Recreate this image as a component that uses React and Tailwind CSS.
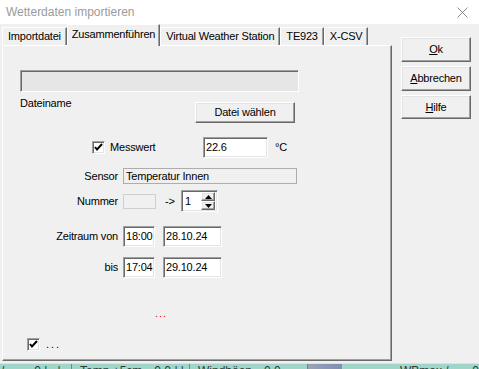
import React from 'react';

const raised =
  'border border-t-white border-l-white border-b-[#696969] border-r-[#696969] shadow-[inset_-1px_-1px_0_#a0a0a0,inset_1px_1px_0_#e3e3e3]';
const sunken =
  'border border-t-[#a0a0a0] border-l-[#a0a0a0] border-b-white border-r-white shadow-[inset_1px_1px_0_#696969,inset_-1px_-1px_0_#e3e3e3]';

function Check() {
  return (
    <div className={`w-[13px] h-[13px] bg-white ${sunken} flex items-center justify-center shrink-0`}>
      <svg width="9" height="9" viewBox="0 0 9 9">
        <path d="M1 4 L3 6.5 L8 1" stroke="#000" strokeWidth="2" fill="none" />
      </svg>
    </div>
  );
}

function Field({ w, h = 21, children, className = '' }) {
  return (
    <div
      style={{ width: w, height: h }}
      className={`bg-white ${sunken} flex items-center pl-[2px] shrink-0 ${className}`}
    >
      {children}
    </div>
  );
}

function Label({ children }) {
  return <div className="w-[115px] text-right shrink-0">{children}</div>;
}

function Btn({ children, className = '' }) {
  return (
    <div className={`bg-[#f0f0f0] ${raised} flex items-center justify-center ${className}`}>
      {children}
    </div>
  );
}

function Tab({ label, active }) {
  if (active) {
    return (
      <div className="h-[22px] px-[4px] flex items-start pt-[3px] border-t border-l border-t-white border-l-white border-r border-r-[#696969] shadow-[inset_-1px_0_0_#a0a0a0] bg-[#f0f0f0] -mb-px relative z-10">
        {label}
      </div>
    );
  }
  return (
    <div className="h-[18px] mt-[3px] px-[5px] flex items-center border-t border-l border-t-white border-l-white border-r border-r-[#696969] shadow-[inset_-1px_0_0_#a0a0a0] bg-[#f0f0f0]">
      {label}
    </div>
  );
}

export default function App() {
  return (
    <div
      className="w-[479px] h-[369px] bg-[#f0f0f0] overflow-hidden text-[11px] leading-[13px] tracking-[-0.2px] text-black flex flex-col"
      style={{ fontFamily: '"Liberation Sans", Arial, sans-serif' }}
    >
      {/* Title bar */}
      <div className="h-[24px] bg-white flex items-center justify-between pl-[6px] pr-[11px] shrink-0">
        <span className="text-[12px] tracking-normal text-[#9b9b9b]">Wetterdaten importieren</span>
        <svg width="11" height="11" viewBox="0 0 11 11">
          <path d="M0.5 0.5 L10.5 10.5 M10.5 0.5 L0.5 10.5" stroke="#8a8a8a" strokeWidth="1" />
        </svg>
      </div>

      <div className="flex flex-1">
        {/* Tabs + panel */}
        <div className="ml-[2px] w-[390px] flex flex-col">
          <div className="flex h-[21px] items-start">
            <Tab label="Importdatei" />
            <Tab label="Zusammenführen" active />
            <Tab label="Virtual Weather Station" />
            <Tab label="TE923" />
            <Tab label="X-CSV" />
          </div>
          <div className="h-[316px] border border-t-white border-l-white border-r-[#696969] border-b-[#696969] shadow-[inset_-1px_-1px_0_#a0a0a0] flex flex-col">
            {/* Dateiname field */}
            <div className="ml-[17px] mt-[24px] w-[279px] h-[22px] bg-[#e6e6e6] border border-t-[#a0a0a0] border-l-[#a0a0a0] border-b-white border-r-white shadow-[inset_1px_1px_0_#696969]" />
            <div className="flex ml-[17px] items-start">
              <div className="mt-[5px] w-[175px]">Dateiname</div>
              <Btn className="mt-[10px] w-[100px] h-[21px]">Datei wählen</Btn>
            </div>

            {/* Messwert */}
            <div className="flex items-center mt-[14px] h-[21px]">
              <div className="ml-[89px]">
                <Check />
              </div>
              <span className="ml-[5px] w-[93px]">Messwert</span>
              <Field w={65}>22.6</Field>
              <span className="ml-[7px]">°C</span>
            </div>

            {/* Sensor */}
            <div className="flex items-center mt-[10px]">
              <Label>Sensor</Label>
              <div className="ml-[5px] w-[174px] h-[16px] border border-[#adadad] flex items-center pl-[2px]">
                Temperatur Innen
              </div>
            </div>

            {/* Nummer */}
            <div className="flex items-center mt-[6px] h-[22px]">
              <Label>Nummer</Label>
              <div className="ml-[5px] w-[33px] h-[15px] border border-[#cfcfcf]" />
              <span className="ml-[9px] w-[16px]">-&gt;</span>
              <div className={`w-[37px] h-[22px] bg-white ${sunken} flex items-center pl-[3px] pr-[2px]`}>
                <span className="flex-1">1</span>
                <div className="flex flex-col w-[14px] h-[18px]">
                  <Btn className="flex-1">
                    <svg width="7" height="4" viewBox="0 0 7 4">
                      <path d="M0 4 L3.5 0 L7 4 Z" fill="#000" />
                    </svg>
                  </Btn>
                  <Btn className="flex-1">
                    <svg width="7" height="4" viewBox="0 0 7 4">
                      <path d="M0 0 L3.5 4 L7 0 Z" fill="#000" />
                    </svg>
                  </Btn>
                </div>
              </div>
            </div>

            {/* Zeitraum von */}
            <div className="flex items-center mt-[14px]">
              <Label>Zeitraum von</Label>
              <Field w={32} className="ml-[5px]">18:00</Field>
              <Field w={59} className="ml-[8px]">28.10.24</Field>
            </div>

            {/* bis */}
            <div className="flex items-center mt-[10px]">
              <Label>bis</Label>
              <Field w={32} className="ml-[5px]">17:04</Field>
              <Field w={59} className="ml-[8px]">29.10.24</Field>
            </div>

            <div className="ml-[152px] mt-[31px] text-[#e00000] tracking-[1px] leading-[8px]">...</div>

            <div className="flex items-center ml-[24px] mt-[21px]">
              <Check />
              <span className="ml-[6px] tracking-[2px]">...</span>
            </div>
          </div>
        </div>

        {/* Right-side buttons */}
        <div className="ml-[9px] mt-[13px] flex flex-col gap-[4px]">
          <Btn className="w-[70px] h-[25px]">
            <span><u>O</u>k</span>
          </Btn>
          <Btn className="w-[70px] h-[25px]">
            <span><u>A</u>bbrechen</span>
          </Btn>
          <Btn className="w-[70px] h-[24px]">
            <span><u>H</u>ilfe</span>
          </Btn>
        </div>
      </div>

      {/* Background application peeking below */}
      <div className="h-[6px] bg-[#9fd6c9] border-t border-[#c8ebe2] flex overflow-hidden text-[12px] leading-[14px] tracking-normal text-[#2a3a36] shrink-0">
        <div className="w-[72px] flex gap-[10px] pl-[1px] border-r border-[#6b8a83]">
          <span>/</span>
          <span className="ml-[20px]">0 |</span>
          <span>|</span>
        </div>
        <div className="w-[118px] flex pl-[8px] gap-[12px] border-r border-[#6b8a83]">
          <span>Temp +5cm</span>
          <span>0 0 | |</span>
        </div>
        <div className="w-[118px] flex pl-[8px] gap-[12px] border-r border-[#6b8a83]">
          <span>Windböen</span>
          <span>0 0 km/h</span>
        </div>
        <div className="w-[34px] bg-gradient-to-r from-[#9aa3b8] to-[#7f8fb0]" />
        <div className="flex-1 flex pl-[58px] gap-[10px]">
          <span>WBmax / Bft</span>
          <span>0</span>
        </div>
      </div>
    </div>
  );
}
